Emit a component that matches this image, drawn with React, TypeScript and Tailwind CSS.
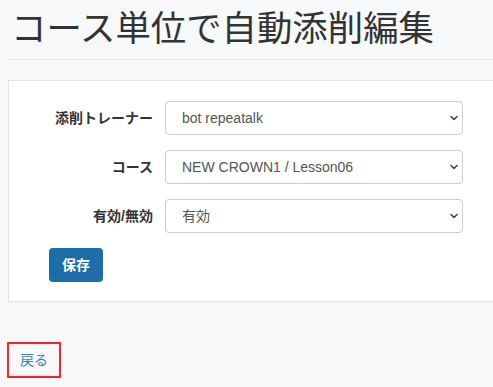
import React from "react";

const Chevron = () => (
  <svg
    className="pointer-events-none absolute right-[4px] top-1/2 -translate-y-1/2"
    width="8"
    height="6"
    viewBox="0 0 8 6"
    fill="none"
  >
    <path d="M1 1.5 L4 4.5 L7 1.5" stroke="#444" strokeWidth="1.6" strokeLinecap="round" strokeLinejoin="round" />
  </svg>
);

const Field = ({ label, value }: { label: string; value: string }) => (
  <div className="flex items-center h-[34px]">
    <div className="w-[144px] text-right text-[14px] font-bold text-[#333]">{label}</div>
    <div className="relative ml-[12px] w-[298px] h-[34px] bg-white border border-[#cccccc] rounded-[4px] flex items-center pl-[16px] text-[14px] text-[#555]">
      {value}
      <Chevron />
    </div>
  </div>
);

export default function App() {
  return (
    <div
      className="min-h-screen bg-[#f7f8fa] overflow-hidden"
      style={{ fontFamily: '"Liberation Sans", "Noto Sans CJK JP", sans-serif' }}
    >
      <div className="ml-[8px] pt-[9px] pb-[10px] border-b border-[#e6e6e6]">
        <h1 className="ml-[3px] text-[35.4px] leading-[40px] font-normal text-[#333] whitespace-nowrap">
          コース単位で自動添削編集
        </h1>
      </div>
      <div className="mt-[20px] ml-[8px] bg-white border border-r-0 border-[#e4e4e4] pt-[20px] pb-[19px]">
        <div className="flex flex-col gap-[15px]">
          <Field label="添削トレーナー" value="bot repeatalk" />
          <Field label="コース" value="NEW CROWN1 / Lesson06" />
          <Field label="有効/無効" value="有効" />
          <div className="pl-[40px]">
            <button className="h-[34px] w-[54px] rounded-[4px] bg-[#1d6ea8] text-white text-[14px] font-bold">
              保存
            </button>
          </div>
        </div>
      </div>
      <div className="mt-[40px] ml-[7px] w-[54px] h-[36px] border-2 border-[#ff2222] flex items-center justify-center text-[14px] text-[#3a80c2]">
        戻る
      </div>
    </div>
  );
}
